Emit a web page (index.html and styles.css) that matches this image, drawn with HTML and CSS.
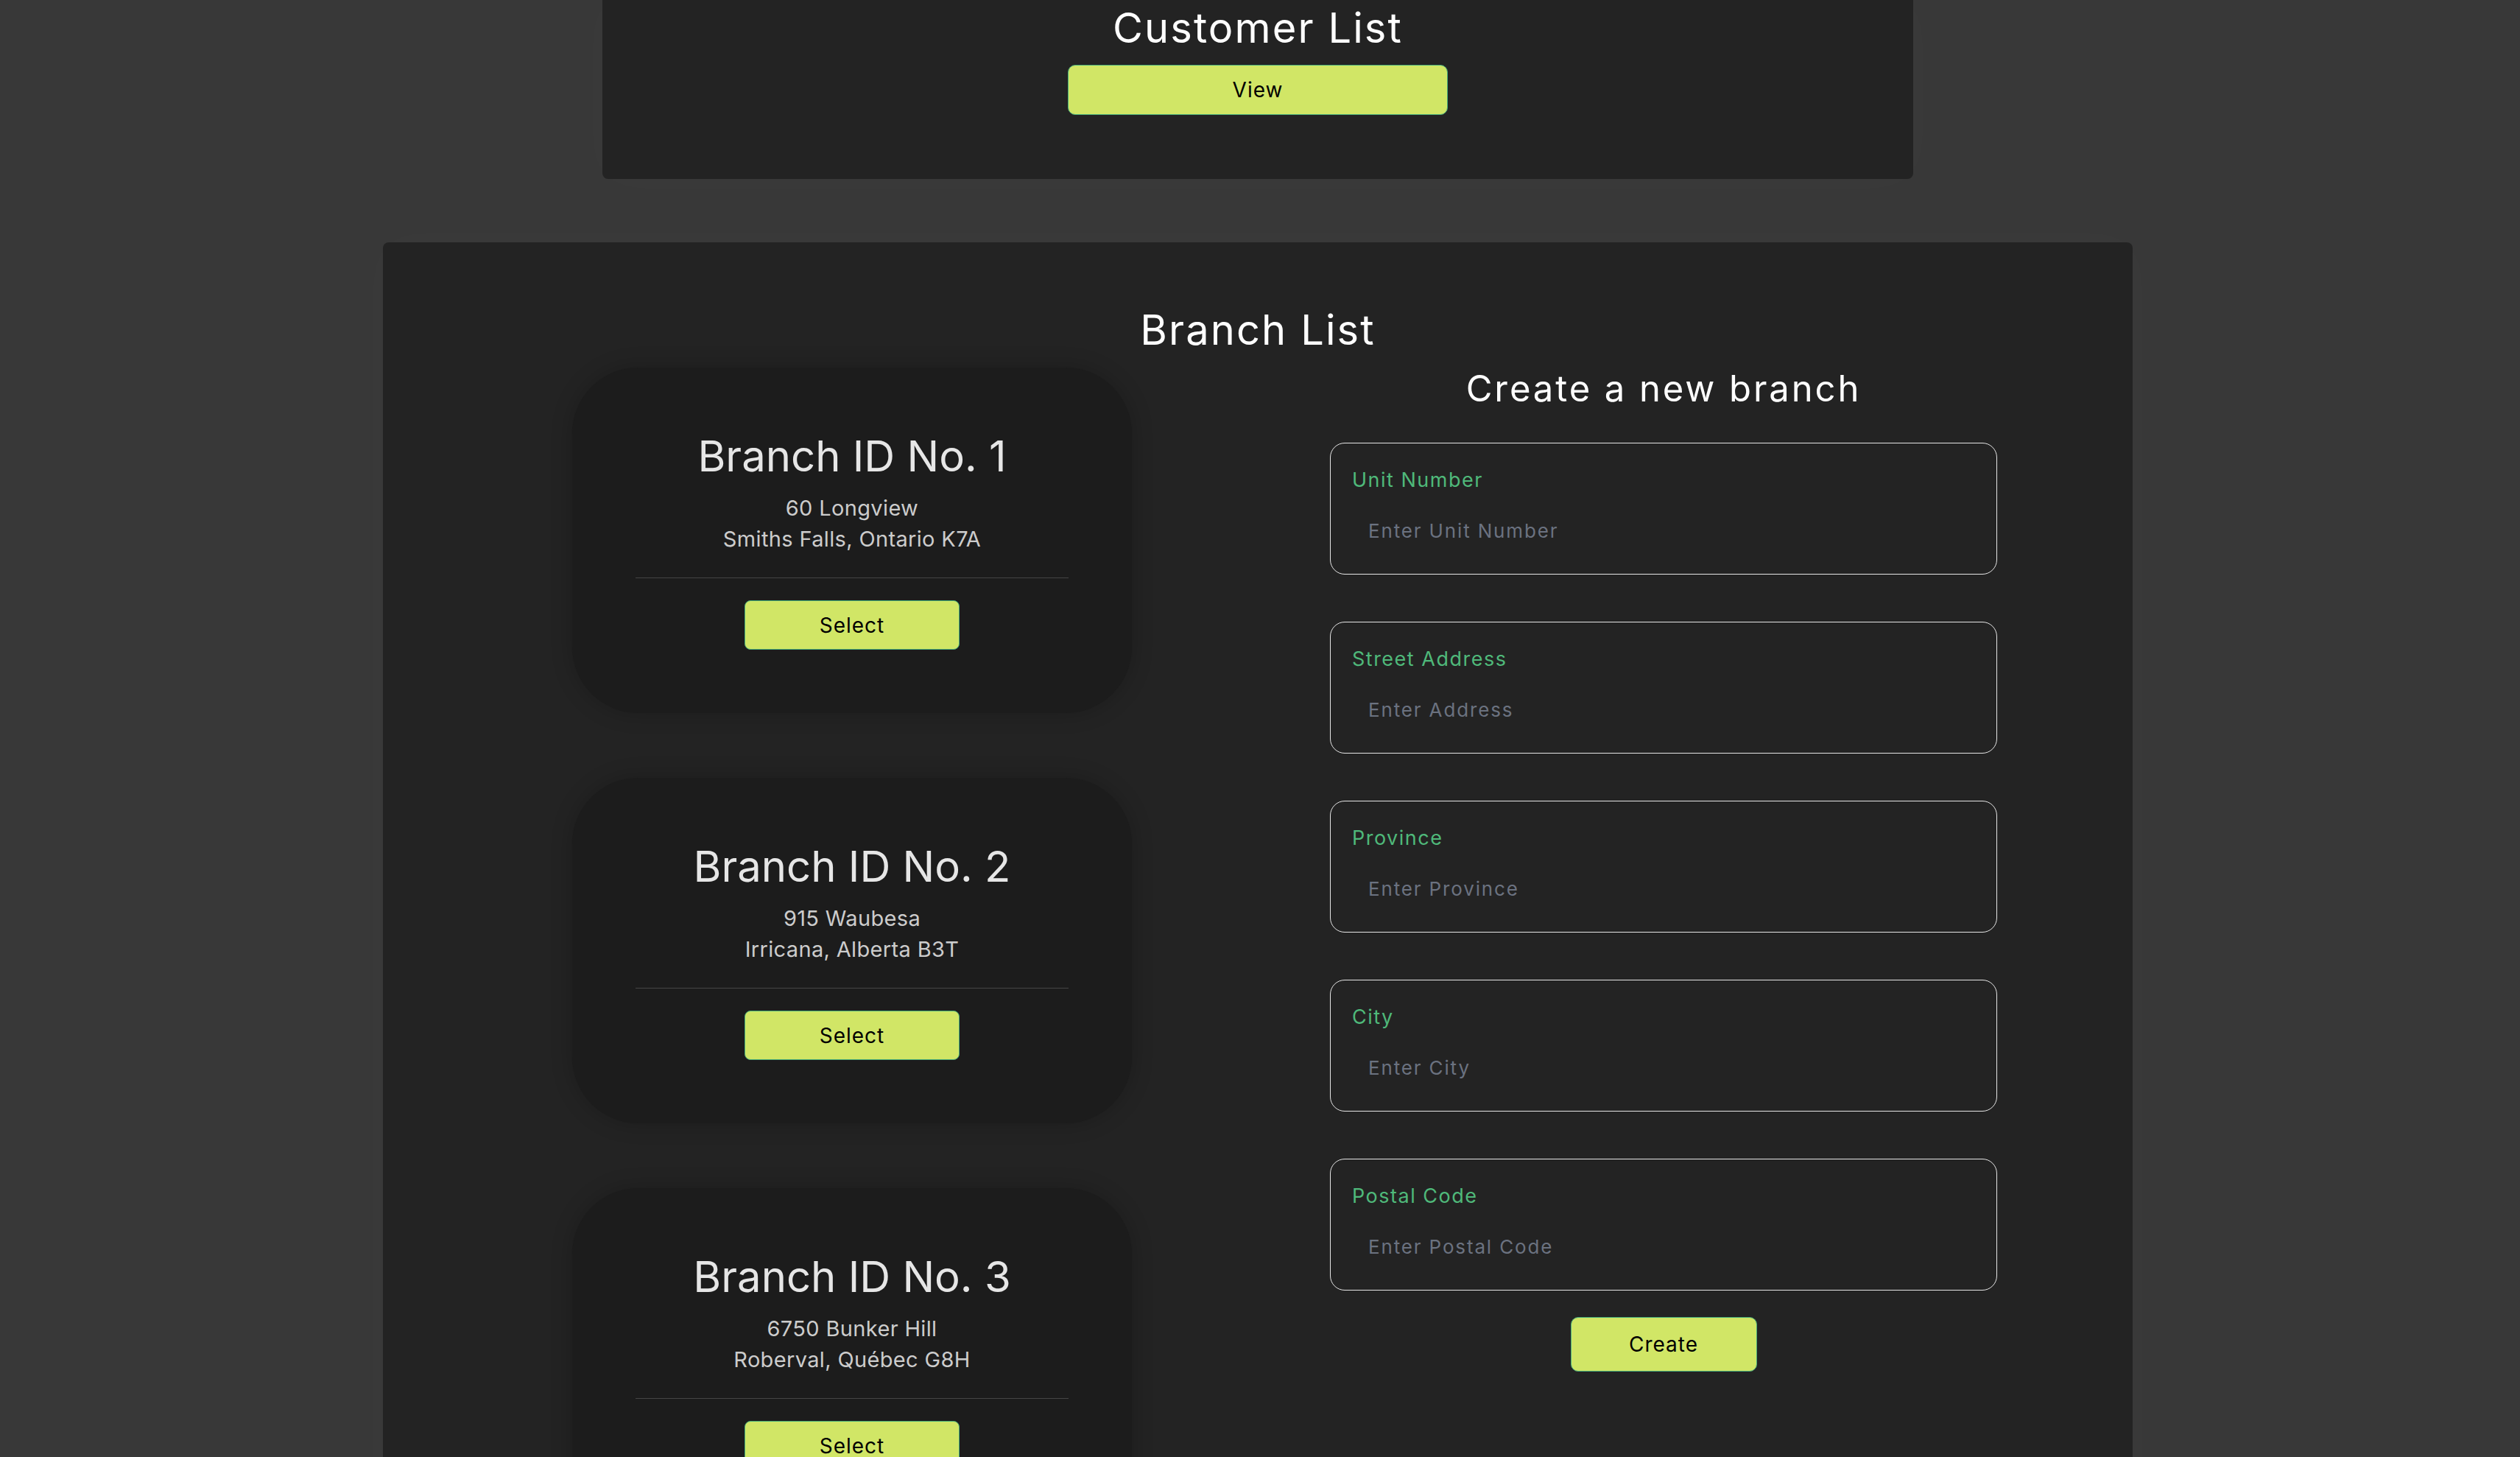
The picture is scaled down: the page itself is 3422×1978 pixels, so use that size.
FILE: index.html
```html
<!DOCTYPE html>
<html lang="en">
<head>
<meta charset="utf-8">
<title>Branches</title>
<link rel="stylesheet" href="styles.css">
</head>
<body>
<main class="page">
  <section class="panel panel-top">
    <h1 class="panel-title">Customer List</h1>
    <button class="btn btn-view" type="button">View</button>
  </section>

  <section class="panel panel-branch">
    <h1 class="panel-title">Branch List</h1>
    <div class="branch-layout">
      <div class="branch-cards">
        <article class="card">
          <h3 class="card-title">Branch ID No. 1</h3>
          <p class="card-address">60 Longview<br>Smiths Falls, Ontario K7A</p>
          <hr class="card-divider">
          <button class="btn btn-select" type="button">Select</button>
        </article>
        <article class="card">
          <h3 class="card-title">Branch ID No. 2</h3>
          <p class="card-address">915 Waubesa<br>Irricana, Alberta B3T</p>
          <hr class="card-divider">
          <button class="btn btn-select" type="button">Select</button>
        </article>
        <article class="card">
          <h3 class="card-title">Branch ID No. 3</h3>
          <p class="card-address">6750 Bunker Hill<br>Roberval, Québec G8H</p>
          <hr class="card-divider">
          <button class="btn btn-select" type="button">Select</button>
        </article>
      </div>

      <form class="branch-form">
        <h2 class="form-title">Create a new branch</h2>
        <div class="field">
          <label class="field-label" for="unit">Unit Number</label>
          <input class="field-input" id="unit" type="text" placeholder="Enter Unit Number">
        </div>
        <div class="field">
          <label class="field-label" for="street">Street Address</label>
          <input class="field-input" id="street" type="text" placeholder="Enter Address">
        </div>
        <div class="field">
          <label class="field-label" for="province">Province</label>
          <input class="field-input" id="province" type="text" placeholder="Enter Province">
        </div>
        <div class="field">
          <label class="field-label" for="city">City</label>
          <input class="field-input" id="city" type="text" placeholder="Enter City">
        </div>
        <div class="field">
          <label class="field-label" for="postal">Postal Code</label>
          <input class="field-input" id="postal" type="text" placeholder="Enter Postal Code">
        </div>
        <button class="btn btn-create" type="button">Create</button>
      </form>
    </div>
  </section>
</main>
</body>
</html>
```

FILE: styles.css
```css
html, body {
  margin: 0;
  background: #383838;
}

body {
  padding: 0 6px 0 0;
  font-family: Inter, "Noto Sans", "DejaVu Sans", sans-serif;
  color: #fff;
}

.page {
  display: flex;
  flex-direction: column;
  align-items: center;
  gap: 86px;
}

.panel {
  box-sizing: border-box;
  background: #232323;
  border-radius: 8px;
  box-shadow: 0 0 60px rgba(255, 255, 255, 0.025);
}

.panel-title {
  margin: 0;
  font-size: 56px;
  line-height: 68px;
  font-weight: 400;
  letter-spacing: 2.1px;
  color: #ffffff;
  text-align: center;
}

.panel-top {
  width: 1780px;
  padding: 4px 0 87px;
  border-radius: 0 0 8px 8px;
  display: flex;
  flex-direction: column;
  align-items: center;
  gap: 16px;
}

.btn {
  box-sizing: border-box;
  display: flex;
  align-items: center;
  justify-content: center;
  padding: 0;
  background: #d1e666;
  border: 1px solid #47ae7b;
  border-radius: 8px;
  color: #000;
  font-family: inherit;
  font-size: 28px;
  font-weight: 400;
  letter-spacing: 1px;
  cursor: pointer;
}

.btn-view {
  width: 516px;
  height: 68px;
  border-radius: 10px;
}

.panel-branch {
  width: 2376px;
  padding: 85px 0 120px;
}

.branch-layout {
  display: grid;
  grid-template-columns: 760px 906px;
  column-gap: 269px;
  padding-left: 257px;
  margin-top: 17px;
  align-items: start;
}

.branch-cards {
  display: flex;
  flex-direction: column;
  gap: 88px;
}

.card {
  box-sizing: border-box;
  background: #1c1c1c;
  border-radius: 90px;
  padding: 85px 0 86px;
  display: flex;
  flex-direction: column;
  align-items: center;
  box-shadow: 0 0 30px rgba(0, 0, 0, 0.2);
}

.card-title {
  margin: 0;
  font-size: 58px;
  line-height: 70px;
  font-weight: 400;
  color: #e6e6e6;
}

.card-address {
  margin: 15px 0 0;
  font-size: 29px;
  line-height: 42px;
  letter-spacing: 0.35px;
  color: #cccccc;
  text-align: center;
}

.card-divider {
  width: 588px;
  height: 1px;
  margin: 31px 0 0;
  border: 0;
  background: #454545;
}

.btn-select {
  margin-top: 30px;
  width: 292px;
  height: 67px;
}

.branch-form {
  display: flex;
  flex-direction: column;
  margin: 0;
}

.form-title {
  margin: 0 0 44px;
  font-size: 49px;
  line-height: 58px;
  font-weight: 400;
  letter-spacing: 2.9px;
  color: #ffffff;
  text-align: center;
}

.field {
  box-sizing: border-box;
  height: 179px;
  margin-bottom: 64px;
  padding: 33px 30px 0 29px;
  border: 1px solid #e6e6e6;
  border-radius: 20px;
}

.field:last-of-type {
  margin-bottom: 36px;
}

.field-label {
  display: block;
  font-size: 27px;
  line-height: 33px;
  letter-spacing: 1.5px;
  color: #4fb97a;
}

.field-input {
  display: block;
  box-sizing: border-box;
  width: 100%;
  height: 32px;
  margin-top: 37px;
  padding: 0 0 0 22px;
  border: 0;
  outline: none;
  background: transparent;
  font-family: inherit;
  font-size: 26px;
  line-height: 32px;
  letter-spacing: 1.85px;
  color: #e6e6e6;
}

.field-input::placeholder {
  color: #6b7280;
  opacity: 1;
}

.btn-create {
  align-self: center;
  width: 253px;
  height: 74px;
  border-radius: 10px;
}
```
